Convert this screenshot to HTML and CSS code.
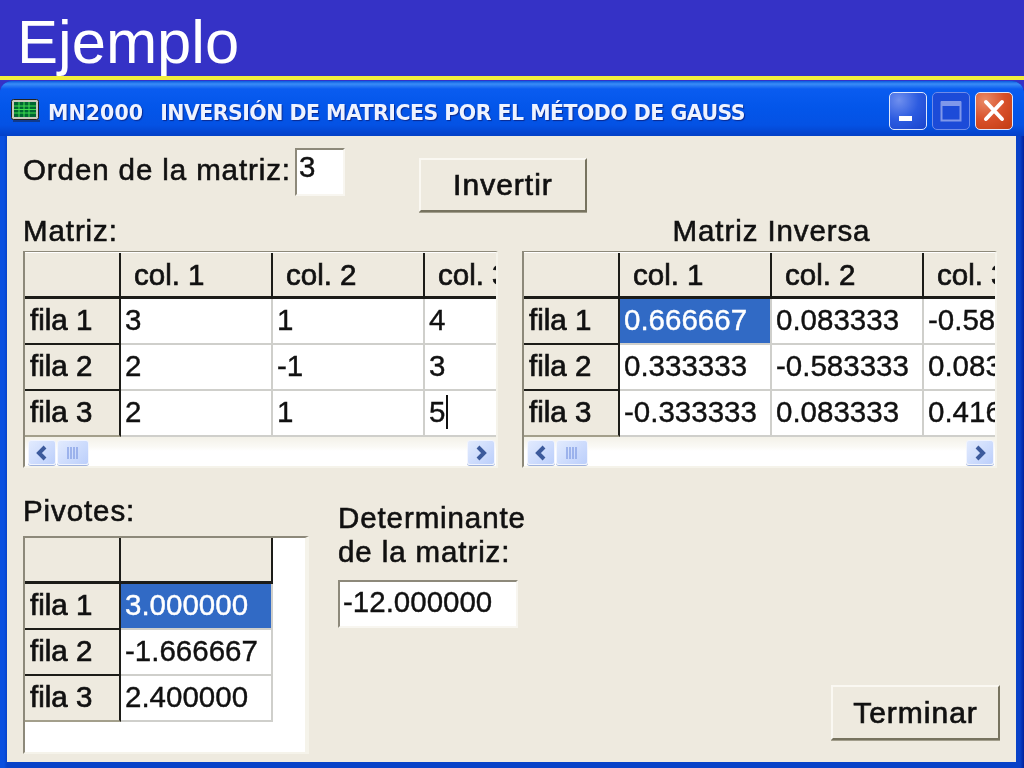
FILE: index.html
```html
<!DOCTYPE html>
<html lang="es">
<head>
<meta charset="utf-8">
<title>Ejemplo</title>
<link rel="stylesheet" href="styles.css">
</head>
<body>
<header class="slide-head"><h1>Ejemplo</h1></header>
<main class="window">
  <div class="titlebar">
    <svg class="app-icon" width="30" height="24" viewBox="0 0 30 24">
      <rect x="0.5" y="0.5" width="27" height="20" rx="2" fill="#c9c9bd" stroke="#222"/>
      <rect x="3" y="3" width="22" height="15" fill="#063"/>
      <path d="M3 7h22M3 10.500h22M3 14h22M8 3v15M13 3v15M18 3v15" stroke="#3fe04f" stroke-width="1"/>
      <rect x="2" y="21" width="27" height="2" fill="#123a8a"/>
    </svg>
    <div class="title-text"><span class="app-name">MN2000</span>INVERSIÓN DE MATRICES POR EL MÉTODO DE GAUSS</div>
    <div class="caption-btns">
      <div class="cap cap-min"><svg width="36" height="36" viewBox="0 0 36 36"><rect x="9" y="23" width="13" height="5" fill="#fff"/></svg></div>
      <div class="cap cap-max"><svg width="36" height="36" viewBox="0 0 36 36"><rect x="8.500" y="9.500" width="19" height="18" fill="none" stroke="#7f97ea" stroke-width="2"/><rect x="8" y="8" width="20" height="5" fill="#7f97ea"/></svg></div>
      <div class="cap cap-close"><svg width="36" height="36" viewBox="0 0 36 36"><path d="M10 9l16 17M26 9L10 26" stroke="#fff" stroke-width="4" stroke-linecap="round"/></svg></div>
    </div>
  </div>

  <div class="client">
    <div class="top-row">
      <label class="label order-label">Orden de la matriz:</label>
      <div class="field order-field">3</div>
      <div class="btn btn-invert">Invertir</div>
    </div>

    <div class="grids-row">
      <section class="grid-block">
        <div class="label grid-title">Matriz:</div>
        <div class="grid-box">
          <div class="clip">
            <table class="sheet">
              <colgroup><col class="c0"><col class="c1"><col class="c1"><col class="c1"></colgroup>
              <tr class="head"><th></th><th>col. 1</th><th>col. 2</th><th>col. 3</th></tr>
              <tr><th>fila 1</th><td>3</td><td>1</td><td>4</td></tr>
              <tr><th>fila 2</th><td>2</td><td>-1</td><td>3</td></tr>
              <tr><th>fila 3</th><td>2</td><td>1</td><td>5<span class="caret"></span></td></tr>
            </table>
          </div>
          <div class="hscroll">
            <div class="sb sb-arrow"><svg width="24" height="24" viewBox="0 0 24 24"><path d="M15 6l-6 6 6 6" fill="none" stroke="#3c5a9c" stroke-width="4"/></svg></div>
            <div class="sb sb-thumb"><svg width="24" height="24" viewBox="0 0 24 24"><path d="M7 6v12M10 6v12M13 6v12M16 6v12" stroke="#8aa4e6" stroke-width="1.500"/></svg></div>
            <div class="sb sb-arrow sb-end"><svg width="24" height="24" viewBox="0 0 24 24"><path d="M9 6l6 6-6 6" fill="none" stroke="#3c5a9c" stroke-width="4"/></svg></div>
          </div>
        </div>
      </section>

      <section class="grid-block">
        <div class="label grid-title grid-title-center">Matriz Inversa</div>
        <div class="grid-box">
          <div class="clip">
            <table class="sheet">
              <colgroup><col class="c0"><col class="c1"><col class="c1"><col class="c1"></colgroup>
              <tr class="head"><th></th><th>col. 1</th><th>col. 2</th><th>col. 3</th></tr>
              <tr><th>fila 1</th><td class="sel">0.666667</td><td>0.083333</td><td>-0.583333</td></tr>
              <tr><th>fila 2</th><td>0.333333</td><td>-0.583333</td><td>0.083333</td></tr>
              <tr><th>fila 3</th><td>-0.333333</td><td>0.083333</td><td>0.416667</td></tr>
            </table>
          </div>
          <div class="hscroll">
            <div class="sb sb-arrow"><svg width="24" height="24" viewBox="0 0 24 24"><path d="M15 6l-6 6 6 6" fill="none" stroke="#3c5a9c" stroke-width="4"/></svg></div>
            <div class="sb sb-thumb"><svg width="24" height="24" viewBox="0 0 24 24"><path d="M7 6v12M10 6v12M13 6v12M16 6v12" stroke="#8aa4e6" stroke-width="1.500"/></svg></div>
            <div class="sb sb-arrow sb-end"><svg width="24" height="24" viewBox="0 0 24 24"><path d="M9 6l6 6-6 6" fill="none" stroke="#3c5a9c" stroke-width="4"/></svg></div>
          </div>
        </div>
      </section>
    </div>

    <div class="bottom-row">
      <section class="pivots">
        <div class="label pivots-title">Pivotes:</div>
        <div class="grid-box pivots-box">
          <table class="sheet">
            <colgroup><col class="c0"><col class="c1"></colgroup>
            <tr class="head"><th></th><th></th></tr>
            <tr><th>fila 1</th><td class="sel">3.000000</td></tr>
            <tr><th>fila 2</th><td>-1.666667</td></tr>
            <tr><th>fila 3</th><td>2.400000</td></tr>
          </table>
        </div>
      </section>
      <section class="det">
        <div class="label det-title">Determinante<br>de la matriz:</div>
        <div class="field det-field">-12.000000</div>
      </section>
      <div class="btn btn-end">Terminar</div>
    </div>
  </div>
</main>
</body>
</html>
```

FILE: styles.css
```css
* { box-sizing: border-box; }
html, body { margin: 0; padding: 0; }
body {
  width: 1024px;
  height: 768px;
  overflow: hidden;
  background: #3532c6;
  font-family: "Liberation Sans", Arial, sans-serif;
  color: #111;
}
.slide-head {
  height: 80px;
  padding-left: 17px;
  background: #3532c6;
  border-bottom: 4px solid #f2ee3c;
}
.slide-head h1 {
  margin: 0;
  font-size: 61.500px;
  line-height: 84px;
  font-weight: 400;
  color: #fff;
}
.window {
  height: 688px;
  margin-top: 1px;
  padding: 0 8px 6px 7px;
  border-radius: 12px 12px 0 0;
  background: linear-gradient(90deg, #0a50e0 0, #0a50e0 4px, #0742c8 7px, #0742c8 1017px, #0a40c8 1020px, #00219c 1024px);
  filter: blur(0.4px);
}
.titlebar {
  display: flex;
  align-items: center;
  height: 55px;
  margin: 0 -8px 0 -7px;
  padding: 4px 0 0 11px;
  border-radius: 12px 12px 0 0;
  background: linear-gradient(180deg, #0a5ae0 0, #3a8cf6 3px, #0a5cf0 8px, #0356ea 26px, #0452e4 44px, #0440c8 55px);
}
.app-icon { flex: none; margin-right: 7px; }
.title-text {
  flex: 1;
  padding-top: 4px;
  font-family: "DejaVu Sans", sans-serif;
  font-weight: 700;
  font-size: 20.500px;
  letter-spacing: -0.53px;
  white-space: nowrap;
  color: #eef3ff;
  text-shadow: 1px 1px 1px #0a2a90;
}
.app-name { margin-right: 17px; letter-spacing: 0.1px; }
.caption-btns { display: flex; gap: 5px; margin-right: 11px; }
.cap {
  width: 38px;
  height: 38px;
  border: 1px solid #dfe7fb;
  border-radius: 5px;
}
.cap svg { display: block; }
.cap-min { background: radial-gradient(circle at 25% 20%, #6f8fee 0, #2c5be0 50%, #1a44cc 100%); }
.cap-max { background: #1c4bd8; border-color: #6f8ce8; }
.cap-close { background: radial-gradient(circle at 25% 20%, #e98a66 0, #d8502a 50%, #c23c12 100%); }

.client {
  height: 626px;
  padding: 12px 15px 0 16px;
  background: #eeeadf;
}
.label {
  font-size: 29.500px;
  letter-spacing: 0.9px;
  line-height: 32px;
  white-space: nowrap;
  color: #111;
  -webkit-text-stroke: 0.6px #111;
}
.top-row { display: flex; align-items: flex-start; height: 64px; }
.order-label { margin: 6px 4px 0 0; }
.field {
  background: #fff;
  border: 2px solid;
  border-color: #8d897a #f8f6f0 #f8f6f0 #8d897a;
  font-size: 29.500px;
  color: #111;
  -webkit-text-stroke: 0.4px #111;
}
.order-field { flex: none; width: 50px; height: 48px; padding: 0 0 0 2px; line-height: 34px; }
.btn {
  display: flex;
  align-items: center;
  justify-content: center;
  flex: none;
  background: #eeeadf;
  border: 2px solid;
  border-color: #faf8f2 #77735f #77735f #faf8f2;
  box-shadow: 0 1px 0 #a29e8c;
  font-size: 30px;
  letter-spacing: 1px;
  color: #111;
  -webkit-text-stroke: 0.7px #111;
}
.btn-invert { width: 168px; height: 54px; margin: 10px 0 0 74px; }

.grids-row { display: flex; gap: 24px; margin-top: 2px; }
.grid-block { width: 475px; }
.grid-title { height: 37px; padding-top: 1px; }
.grid-title-center { text-align: center; padding-left: 24px; }
.grid-box {
  width: 475px;
  height: 217px;
  padding: 1px 0 0 0;
  background: #fff;
  border: 2px solid;
  border-color: #8d897a #f5f3ea #f5f3ea #8d897a;
  border-top-width: 1px;
}
.clip { width: 100%; height: 184px; overflow: hidden; }
.sheet {
  width: 552px;
  table-layout: fixed;
  border-collapse: separate;
  border-spacing: 0;
  font-size: 29.500px;
  color: #111;
}
.sheet .c0 { width: 96px; }
.sheet .c1 { width: 152px; }
.sheet tr { height: 46px; }
.sheet th, .sheet td {
  height: 46px;
  padding: 0 0 3px 4px;
  overflow: hidden;
  white-space: nowrap;
  text-align: left;
  -webkit-text-stroke: 0.4px #111;
}
.sheet th {
  padding-left: 5px;
  font-weight: 400;
  background: #eeeadf;
  border-right: 2px solid #1c1c18;
  border-bottom: 2px solid #1c1c18;
  -webkit-text-stroke: 0.7px #111;
}
.sheet tr:last-child th { border-bottom: 2px solid #a39f8b; }
.sheet td {
  border-right: 2px solid #cfcfcb;
  border-bottom: 2px solid #cfcfcb;
}
.sheet .head th {
  padding: 0 0 0 13px;
  border-bottom: 3px solid #1c1c18;
}
.sheet .sel {
  background: #316ac5;
  color: #fff;
  -webkit-text-stroke: 0.4px #fff;
}
.caret {
  display: inline-block;
  width: 2px;
  height: 34px;
  margin-left: 1px;
  vertical-align: -7px;
  background: #111;
}
.hscroll {
  display: flex;
  gap: 1px;
  height: 29px;
  padding: 3px 1px 0 3px;
  background: linear-gradient(180deg, #f3f1e8 0, #fbfaf6 10px, #fff 14px);
}
.sb {
  width: 28px;
  height: 25px;
  display: flex;
  align-items: center;
  justify-content: center;
  border: 1px solid #f2f5fe;
  border-radius: 3px;
  background: linear-gradient(135deg, #e2ebfe, #bccffb);
  box-shadow: 0 1px 0 #9fb2dc;
}
.sb-thumb { width: 32px; }
.sb-end { margin-left: auto; }

.bottom-row { display: flex; align-items: flex-start; height: 278px; margin-top: 27px; }
.pivots { flex: none; width: 286px; }
.pivots-title { height: 41px; padding-top: 0; }
.pivots-box { width: 286px; height: 218px; padding-top: 0; border-top-width: 2px; border-right-width: 4px; }
.pivots-box .sheet { width: 248px; }
.det { margin: 6px 0 0 29px; }
.det-title { line-height: 34px; height: 79px; }
.det-field { width: 180px; height: 48px; padding: 0 0 0 3px; line-height: 39px; }
.btn-end { width: 169px; height: 55px; margin: 190px 1px 0 auto; }
```
